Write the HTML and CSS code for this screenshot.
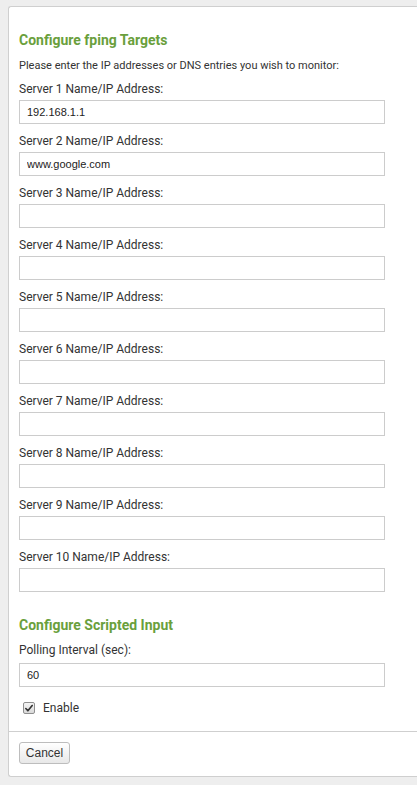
FILE: index.html
```html
<!DOCTYPE html>
<html>
<head>
<meta charset="utf-8">
<link rel="stylesheet" href="styles.css">
</head>
<body>
<div class="panel">
  <div class="content">
    <h2 class="heading">Configure fping Targets</h2>
    <p class="intro">Please enter the IP addresses or DNS entries you wish to monitor:</p>
    <div class="field"><label class="label">Server 1 Name/IP Address:</label><input class="input" type="text" value="192.168.1.1"></div>
    <div class="field"><label class="label">Server 2 Name/IP Address:</label><input class="input" type="text" value="www.google.com"></div>
    <div class="field"><label class="label">Server 3 Name/IP Address:</label><input class="input" type="text"></div>
    <div class="field"><label class="label">Server 4 Name/IP Address:</label><input class="input" type="text"></div>
    <div class="field"><label class="label">Server 5 Name/IP Address:</label><input class="input" type="text"></div>
    <div class="field"><label class="label">Server 6 Name/IP Address:</label><input class="input" type="text"></div>
    <div class="field"><label class="label">Server 7 Name/IP Address:</label><input class="input" type="text"></div>
    <div class="field"><label class="label">Server 8 Name/IP Address:</label><input class="input" type="text"></div>
    <div class="field"><label class="label">Server 9 Name/IP Address:</label><input class="input" type="text"></div>
    <div class="field"><label class="label">Server 10 Name/IP Address:</label><input class="input" type="text"></div>
    <h2 class="heading heading-2">Configure Scripted Input</h2>
    <div class="field"><label class="label">Polling Interval (sec):</label><input class="input" type="text" value="60"></div>
    <label class="check">
      <span class="checkbox"><svg width="11" height="11" viewBox="0 0 11 11"><path d="M2 5.5 L4.3 8 L9 2.2" fill="none" stroke="#333" stroke-width="1.8" stroke-linecap="round" stroke-linejoin="round"/></svg></span>
      <span>Enable</span>
    </label>
  </div>
  <div class="footer">
    <button class="btn" type="button">Cancel</button>
  </div>
</div>
</body>
</html>
```

FILE: styles.css
```css
html {
  overflow: hidden;
  background: #eeeeee;
}
body {
  margin: 0;
  padding: 6px 0 8px 8px;
  font-family: Roboto, "Liberation Sans", Arial, sans-serif;
  color: #333;
}
.panel {
  background: #fff;
  border: 1px solid #cfcfcf;
  border-right: none;
  border-radius: 3px 0 0 3px;
}
.content {
  padding: 25px 0 14px 10px;
  display: flex;
  flex-direction: column;
}
.heading {
  margin: 0;
  font-size: 14px;
  line-height: 16px;
  font-weight: 700;
  color: #6a9f3c;
}
.heading-2 {
  margin-top: 15px;
}
.intro {
  margin: 11px 0 10px;
  font-size: 11px;
  line-height: 13px;
  color: #333;
}
.field {
  display: flex;
  flex-direction: column;
  margin-bottom: 10px;
}
.label {
  font-size: 12px;
  line-height: 14px;
  color: #333;
  margin-bottom: 4px;
}
.heading-2 + .field {
  margin-top: 10px;
}
.heading-2 + .field .label {
  margin-bottom: 6px;
}
.input {
  box-sizing: border-box;
  width: 366px;
  height: 24px;
  margin: 0;
  padding: 0 7px;
  border: 1px solid #cccccc;
  border-radius: 0;
  background: #fff;
  font-family: "Liberation Sans", Arial, sans-serif;
  font-size: 11px;
  color: #222;
  outline: none;
}
.check {
  display: flex;
  align-items: center;
  margin-top: 2px;
  height: 18px;
  font-size: 12px;
  color: #333;
}
.checkbox {
  box-sizing: border-box;
  width: 12px;
  height: 12px;
  margin: 0 8px 0 4px;
  border: 1px solid #8f8f8f;
  border-radius: 2px;
  background: linear-gradient(#f4f4f4, #d9d9d9);
  display: flex;
  align-items: center;
  justify-content: center;
}
.checkbox svg {
  display: block;
}
.footer {
  border-top: 1px solid #cfcfcf;
  padding: 10px 10px 12px;
  display: flex;
}
.btn {
  box-sizing: border-box;
  width: 51px;
  height: 22px;
  padding: 0;
  border: 1px solid #bdbdbd;
  border-radius: 3px;
  background: linear-gradient(#ffffff, #e8e8e8);
  font-family: "Liberation Sans", Arial, sans-serif;
  font-size: 12px;
  color: #333;
}
```
